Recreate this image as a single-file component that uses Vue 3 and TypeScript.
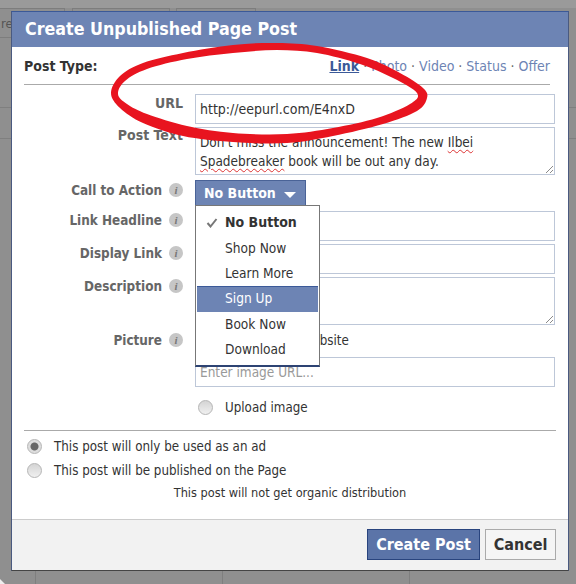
<script setup lang="ts">
const menu = [
  { label: 'No Button', checked: true },
  { label: 'Shop Now' },
  { label: 'Learn More' },
  { label: 'Sign Up', active: true },
  { label: 'Book Now' },
  { label: 'Download' },
]

type Pt = [number, number]

function loop(p: Pt[]): string {
  const n = p.length
  let d = `M${p[0][0]} ${p[0][1]}`
  for (let i = 0; i < n; i++) {
    const a = p[(i + n - 1) % n]
    const b = p[i]
    const c = p[(i + 1) % n]
    const e = p[(i + 2) % n]
    const c1x = b[0] + (c[0] - a[0]) / 6
    const c1y = b[1] + (c[1] - a[1]) / 6
    const c2x = c[0] - (e[0] - b[0]) / 6
    const c2y = c[1] - (e[1] - b[1]) / 6
    d += `C${c1x.toFixed(1)} ${c1y.toFixed(1)} ${c2x.toFixed(1)} ${c2y.toFixed(1)} ${c[0]} ${c[1]}`
  }
  return d + 'Z'
}

const outer: Pt[] = [[111, 93], [120, 76], [143, 63], [183, 53], [233, 45], [277, 43], [317, 46], [367, 58], [400, 73], [423, 88], [427, 98], [417, 111], [383, 124], [333, 136], [287, 143], [233, 142], [183, 136], [143, 123], [120, 108]]
const inner: Pt[] = [[118, 94], [125, 81], [147, 69], [187, 59], [233, 53], [277, 50], [317, 53], [360, 64], [393, 78], [417, 93], [410, 104], [377, 118], [333, 128], [287, 134], [233, 133], [187, 126], [147, 114], [127, 104]]
const ring = loop(outer) + loop(inner)
</script>

<template>
  <div class="page">
    <div class="backdrop">
      <span class="top"></span>
      <span class="ghost g1">re</span><span class="ghost g2"></span><span class="ghost g3"></span>
      <span class="hl l1"></span><span class="hl l2"></span><span class="hl r1"></span><span class="hl r2"></span>
      <span class="vl v1"></span><span class="vl v2"></span><span class="vl v3"></span>
      <span class="corner"></span>
    </div>
    <section class="dialog">
      <h1 class="title">Create Unpublished Page Post</h1>
      <div class="body">
        <div class="type">
          <strong>Post Type:</strong>
          <nav class="tabs">
            <a class="on">Link</a><i>·</i><a>Photo</a><i>·</i><a>Video</a><i>·</i><a>Status</a><i>·</i><a>Offer</a>
          </nav>
        </div>

        <div class="row url">
          <label>URL</label>
          <div class="field one">http://eepurl.com/E4nxD</div>
        </div>
        <div class="row post">
          <label>Post Text</label>
          <div class="field text">Don't miss the announcement! The new <u>Ilbei</u><br /><u>Spadebreaker</u> book will be out any day.<svg class="grip" width="9" height="9" viewBox="0 0 9 9"><path d="M1 8 8 1M5 8 8 5" stroke="#8a8a8a" fill="none" /></svg></div>
        </div>

        <div class="row cta">
          <label class="tip">Call to Action<b class="info">i</b></label>
          <div class="drop">
            <button class="btn">No Button<span class="caret"></span></button>
            <ul class="menu">
              <li v-for="m in menu" :key="m.label" :class="{ active: m.active, checked: m.checked }">
                <svg v-if="m.checked" class="check" width="12" height="10" viewBox="0 0 12 10"><path d="M1.5 5 4.5 8.5 10.5 1" stroke="#777" stroke-width="2" fill="none" /></svg>
                {{ m.label }}
              </li>
            </ul>
          </div>
        </div>
        <div class="row head">
          <label class="tip">Link Headline<b class="info">i</b></label>
          <div class="field one"></div>
        </div>
        <div class="row disp">
          <label class="tip">Display Link<b class="info">i</b></label>
          <div class="field one"></div>
        </div>
        <div class="row desc">
          <label class="tip">Description<b class="info">i</b></label>
          <div class="field tall"><svg class="grip" width="9" height="9" viewBox="0 0 9 9"><path d="M1 8 8 1M5 8 8 5" stroke="#8a8a8a" fill="none" /></svg></div>
        </div>
        <div class="row pic">
          <label class="tip">Picture<b class="info">i</b></label>
          <div class="choice web"><span class="radio"></span><span>Image from website</span></div>
        </div>
        <div class="row img">
          <label></label>
          <div class="field one ph">Enter image URL...</div>
        </div>
        <div class="row up">
          <label></label>
          <div class="choice upload"><span class="radio"></span><span>Upload image</span></div>
        </div>

        <div class="scope">
          <div class="choice"><span class="radio sel"></span><span>This post will only be used as an ad</span></div>
          <div class="choice"><span class="radio"></span><span>This post will be published on the Page</span></div>
          <p class="note">This post will not get organic distribution</p>
        </div>
      </div>
      <footer class="foot">
        <button class="primary">Create Post</button>
        <button class="cancel">Cancel</button>
      </footer>
    </section>
    <svg class="scribble" width="576" height="584" viewBox="0 0 576 584">
      <path fill="#e8141f" fill-rule="evenodd" :d="ring" />
    </svg>
  </div>
</template>

<style>
html, body { margin: 0; background: #8f8f8f; }
</style>

<style scoped>
.page {
  position: relative;
  width: 576px;
  height: 584px;
  overflow: hidden;
  background: #8f8f8f;
  font-family: "DejaVu Sans", "Noto Sans", sans-serif;
  font-stretch: condensed;
  color: #333;
}
.backdrop { position: absolute; inset: 0; }
.top { position: absolute; left: 0; top: 0; width: 100%; height: 8px; background: #9a9a9a; }
.ghost { position: absolute; top: 8px; height: 30px; border: 1px solid #7d7d7d; box-sizing: border-box; }
.g1 { left: -10px; width: 75px; color: #555; font-size: 13px; line-height: 30px; text-align: left; padding-left: 10px; overflow: hidden; }
.g2 { left: 72px; width: 98px; }
.g3 { left: 176px; width: 80px; }
.hl { position: absolute; height: 1px; background: #7f7f7f; }
.l1, .l2 { left: 0; width: 11px; }
.r1, .r2 { left: 569px; width: 7px; }
.l1, .r1 { top: 107px; }
.l2, .r2 { top: 138px; }
.vl { position: absolute; top: 571px; height: 13px; width: 1px; background: #7f7f7f; }
.v1 { left: 35px; }
.v2 { left: 222px; }
.v3 { left: 409px; }
.corner { position: absolute; left: 0; top: 579px; width: 5px; height: 5px; background: #eee; clip-path: polygon(0 0, 100% 100%, 0 100%); }
.dialog {
  position: absolute;
  left: 11px;
  top: 11px;
  width: 558px;
  height: 560px;
  box-sizing: border-box;
  border: 1px solid #4a5a80;
  border-bottom-color: #444;
  border-top-color: #3b5998;
  background: #fff;
  display: flex;
  flex-direction: column;
}
.title {
  margin: 0;
  height: 35px;
  flex: none;
  background: #6d84b4;
  color: #fff;
  font-size: 17.7px;
  font-weight: 700;
  line-height: 35px;
  padding-left: 13px;
  white-space: nowrap;
}
.body { flex: 1; padding: 0 12px; position: relative; }
.type {
  display: flex;
  justify-content: space-between;
  align-items: center;
  height: 37px;
  margin-right: 6px;
  border-bottom: 1px solid #aaa;
  font-size: 14px;
}
.type strong { color: #333; }
.tabs { display: flex; gap: 4px; color: #6d84b4; }
.tabs i { font-style: normal; color: #666; }
.tabs .on { font-weight: 700; color: #3b5998; text-decoration: underline; }
.row { display: flex; font-size: 13.4px; }
.url, .post { font-size: 14px; }
.row label {
  width: 159px;
  margin-right: 12px;
  flex: none;
  display: flex;
  justify-content: flex-end;
  align-items: center;
  height: 20px;
  font-weight: 700;
  color: #666;
  white-space: nowrap;
  box-sizing: border-box;
}
.row label.tip { padding-right: 21px; margin-top: -1px; }
.info {
  width: 14px;
  height: 14px;
  border-radius: 50%;
  background: #c6c6c6;
  color: #777;
  margin-left: 7px;
  margin-right: -21px;
  font: italic 700 11px/14px "Liberation Serif", serif;
  text-align: center;
  flex: none;
}
.field {
  box-sizing: border-box;
  width: 360px;
  border: 1px solid #bdc7d8;
  background: #fff;
  font-size: 13.5px;
  color: #333;
  padding: 0 4px;
  white-space: nowrap;
  position: relative;
}
.one { height: 30px; line-height: 28px; }
.url .field { font-size: 14px; }
.text { height: 48px; line-height: 19px; padding-top: 5px; }
.tall { height: 48px; }
.text u { text-decoration: underline wavy #d33 1px; text-underline-offset: 2px; }
.grip { position: absolute; right: 0; bottom: 0; }
.url { margin-top: 9px; }
.url label { margin-top: -1px; }
.post { margin-top: 3px; }
.post label { margin-top: -2px; }
.cta { margin-top: 5px; }
.cta label.tip { margin-top: 0; }
.drop { position: relative; }
.btn {
  display: flex;
  align-items: center;
  width: 111px;
  height: 26px;
  padding: 0 0 0 8px;
  border: 1px solid #4a6397;
  background: #6d84b4;
  color: #fff;
  font: 700 14px "DejaVu Sans", sans-serif;
  font-stretch: condensed;
  white-space: nowrap;
}
.caret { margin-left: 8px; margin-top: 3px; border: 6px solid transparent; border-top-color: #fff; border-bottom: 0; }
.menu {
  position: absolute;
  z-index: 2;
  left: 0;
  top: 25px;
  box-sizing: border-box;
  width: 125px;
  height: 162px;
  margin: 0;
  padding: 4px 1px 0;
  list-style: none;
  background: #fff;
  border: 1px solid #777;
  border-bottom: 2px solid #2d4373;
}
.menu li {
  position: relative;
  height: 25.2px;
  line-height: 25px;
  padding-left: 28px;
  font-size: 13.6px;
  color: #333;
  white-space: nowrap;
}
.menu li.checked { font-weight: 700; font-size: 14px; height: 26px; }
.menu li.active { background: #6d84b4; color: #fff; box-shadow: inset 0 1px #3b5998; }
.check { position: absolute; left: 9px; top: 8px; }
.head { margin-top: 5px; }
.disp { margin-top: 3px; }
.desc { margin-top: 3px; }
.pic { margin-top: 5px; }
.pic label.tip { margin-top: 0; }
.img { margin-top: 6px; }
.up { margin-top: 9px; }
.ph { color: #999; }
.choice { display: flex; align-items: center; gap: 13px; height: 22px; font-size: 13.25px; color: #333; white-space: nowrap; }
.web { margin-left: 3px; gap: 17px; margin-top: -1px; }
.upload { margin-left: 3px; gap: 12px; }
.radio {
  width: 15px;
  height: 15px;
  flex: none;
  box-sizing: border-box;
  border-radius: 50%;
  border: 1px solid #b5b5b5;
  background: linear-gradient(#d4d4d4, #f0f0f0);
  display: block;
}
.sel { background: radial-gradient(circle, #666 0 3.5px, #ddd 4.5px); }
.scope { margin-top: 12px; border-top: 1px solid #aaa; padding-top: 3px; padding-left: 3px; }
.scope .choice { height: 24px; gap: 12px; }
.note { margin: 2px 0 0; text-align: center; font-size: 12.65px; color: #333; line-height: 17px; padding-right: 3px; }
.foot {
  height: 51px;
  box-sizing: border-box;
  flex: none;
  display: flex;
  justify-content: flex-end;
  align-items: center;
  gap: 5px;
  padding: 0 12px 1px 0;
  background: #f2f2f2;
  border-top: 1px solid #ccc;
}
.foot button { height: 31px; padding: 0; font: 700 16px "DejaVu Sans", sans-serif; font-stretch: condensed; }
.primary { width: 113px; background: #5b74a8; border: 1px solid #29447e; color: #fff; }
.cancel { width: 71px; background: #f5f5f5; border: 1px solid #aaa; color: #333; }
.scribble { position: absolute; left: 0; top: 0; z-index: 3; pointer-events: none; }
</style>
